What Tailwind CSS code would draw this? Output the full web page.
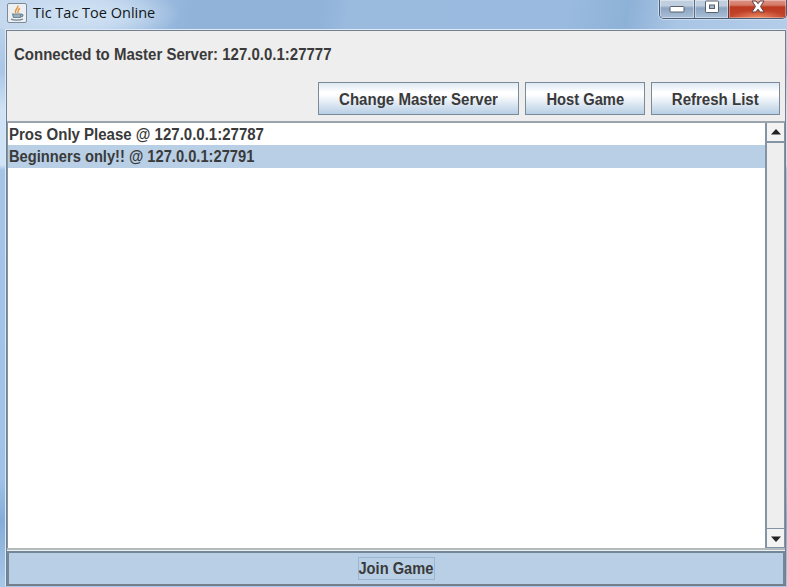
<!DOCTYPE html>
<html lang="en">
<head>
<meta charset="utf-8">
<title>Tic Tac Toe Online</title>
<script src="https://cdn.jsdelivr.net/npm/@tailwindcss/browser@4"></script>
</head>
<body class="w-[787px] h-[587px] overflow-hidden font-['Liberation_Sans',Arial,sans-serif] text-[16px] font-bold text-[#3a3a3a]">
<div class="flex flex-col w-[787px] h-[587px] pl-[5px] bg-[linear-gradient(180deg,#c4d8ee_0,#aac6e6_70px,#d0e2f5_110px,#d0e2f5_165px,#a5c5e8_170px,#9fc2e8_480px,#84add9_520px,#a9c8e9_587px)]">
  <header class="flex h-[29px] shrink-0 -ml-[5px] pl-[7px] bg-[radial-gradient(ellipse_100px_30px_at_80px_14px,#d3e2f3_0%,#cbdef2cc_50%,#cbdef200_100%),linear-gradient(100deg,#c4d7ec_0,#b9d0ea_70px,#91b3da_190px,#91b3da_320px,#9abade_345px,#9abbdf_560px,#8eb1d7_620px,#a9c5e5_670px,#b4cdea_787px)]">
    <svg class="w-[20px] h-[20px] mt-[3px]" viewBox="0 0 20 20" fill="none">
      <rect x=".5" y=".5" width="19" height="19" rx="1.5" fill="#edf0f2" stroke="#7e8a96"/>
      <path d="M10.800 2.500C12.200 5 6.800 6.200 8.800 10M13 5.500C9.800 7 12 8.300 10.600 10" stroke="#e8913d" stroke-width="1.400"/>
      <path d="M5.500 11h8.500l-.8 3.500H6.500ZM14 11.300c3-.6 2.500 2.500-.6 2.700" stroke="#6e8796" stroke-width="1.100" fill="#9fb0ba"/>
      <path d="M4 16c2 1.600 9 1.600 12 0" stroke="#6e8796" stroke-width="1.300"/>
    </svg>
    <span class="ml-[6px] mt-[3px] leading-[20px] text-[14.5px] font-normal text-[#101820] font-['Open_Sans','Noto_Sans',sans-serif] whitespace-nowrap">Tic Tac Toe Online</span>
    <div class="flex ml-auto w-[128px] h-[19px] rounded-b-[5px] border border-t-0 border-[#4b5d73] overflow-hidden shadow-[0_0_0_1px_#c9dcf0]">
      <div class="w-[35px] flex justify-center border-r border-[#5b6b80] bg-linear-to-b from-[#c0cfe0] from-30% via-[#8da5c1] via-45% to-[#a9bfd9] shadow-[inset_0_0_0_1px_#ffffff66]">
        <svg class="w-[16px] h-[18px] shrink-0" viewBox="0 0 16 18"><rect x="1" y="6.500" width="14" height="5.500" rx=".8" fill="#fff" stroke="#57616e"/></svg>
      </div>
      <div class="w-[34px] flex justify-center border-r border-[#5b3b40] bg-linear-to-b from-[#c0cfe0] from-30% via-[#8da5c1] via-45% to-[#a9bfd9] shadow-[inset_0_0_0_1px_#ffffff66]">
        <svg class="w-[16px] h-[18px] shrink-0" viewBox="0 0 16 18"><rect x="1.500" y="1" width="13" height="11.500" rx=".8" fill="#fff" stroke="#57616e"/><rect x="5.500" y="5" width="5" height="3.500" fill="#a9b9cc" stroke="#57616e"/></svg>
      </div>
      <div class="flex-1 flex justify-center bg-[radial-gradient(ellipse_28px_8px_at_50%_100%,#ec8a62_0%,#ec8a6200_100%),linear-gradient(180deg,#dc9285_0,#d57a68_5px,#bb3920_7px,#c4492f_18px)] shadow-[inset_0_0_0_1px_#ffffff55]">
        <svg class="w-[16px] h-[18px] shrink-0" viewBox="0 0 16 18"><path d="M2 1h4L8 3.700 10 1h4L10.500 6.500l3.700 5.500h-4L8 9.200 5.800 12h-4L5.500 6.500Z" fill="#fff" stroke="#633c3f"/></svg>
      </div>
    </div>
  </header>
  <main class="flex flex-col w-[781px] h-[557px] border-t border-l border-t-[#dce9f6] border-l-[#dce9f6] bg-[#eeeeee]">
    <div class="flex flex-col h-full border-t border-l border-r border-b-2 border-[#75808c] border-l-[#6e7f90]">
      <section class="h-[90px] shrink-0 flex flex-col">
        <div class="mt-[14px] ml-[7px] h-[20px] leading-[20px] whitespace-nowrap"><span class="inline-block origin-left scale-x-[0.937]">Connected to Master Server: 127.0.0.1:27777</span></div>
        <div class="mt-[17px] flex justify-end gap-[6px] pr-[5px] h-[33px] leading-[34px] *:flex *:justify-center *:border *:border-[#7a8a99] *:whitespace-nowrap *:bg-[linear-gradient(180deg,#dde8f3_0,#ffffff_30%,#ffffff_38%,#b8cfe5_100%)]">
          <div class="w-[201px]"><span class="scale-x-[0.94]">Change Master Server</span></div>
          <div class="w-[120px]"><span class="scale-x-[0.92]">Host Game</span></div>
          <div class="w-[129px]"><span class="scale-x-[0.94]">Refresh List</span></div>
        </div>
      </section>
      <section class="h-[429px] shrink-0 flex border-t-2 border-b-2 border-t-[#9ba3ac] border-b-[#b3bbbf] bg-white">
        <div class="flex-1 leading-[24px] whitespace-nowrap border-l border-[#8494a4]">
          <div class="h-[22px] pl-px"><span class="inline-block origin-left scale-x-[0.938]">Pros Only Please @ 127.0.0.1:27787</span></div>
          <div class="h-[23px] pl-px bg-[#b8cfe5]"><span class="inline-block origin-left scale-x-[0.918]">Beginners only!! @ 127.0.0.1:27791</span></div>
        </div>
        <div class="w-[20px] flex flex-col justify-between border-l-2 border-r border-l-[#8494a4] border-r-[#8494a4] bg-[#eeeeee]">
          <div class="h-[20px] border-b-2 border-[#8494a4] flex justify-center bg-[#f3f3f3]"><svg class="w-[12px] h-[18px]" viewBox="0 0 12 18"><path d="M1 11.500 6 6l5 5.500Z" fill="#222"/></svg></div>
          <div class="h-[20px] border-t border-b border-[#8494a4] flex justify-center bg-[#f3f3f3]"><svg class="w-[12px] h-[18px]" viewBox="0 0 12 18"><path d="M1 7.500h10L6 13Z" fill="#222"/></svg></div>
        </div>
      </section>
      <div class="flex-1 mt-px border-2 border-b-0 border-[#748798] bg-[#b8cfe5] flex items-center justify-center">
        <div class="h-[23px] leading-[22px] w-[77px] flex justify-center whitespace-nowrap border border-[#99b6d3]"><span class="scale-x-[0.915]">Join Game</span></div>
      </div>
    </div>
  </main>
</div>
</body>
</html>
